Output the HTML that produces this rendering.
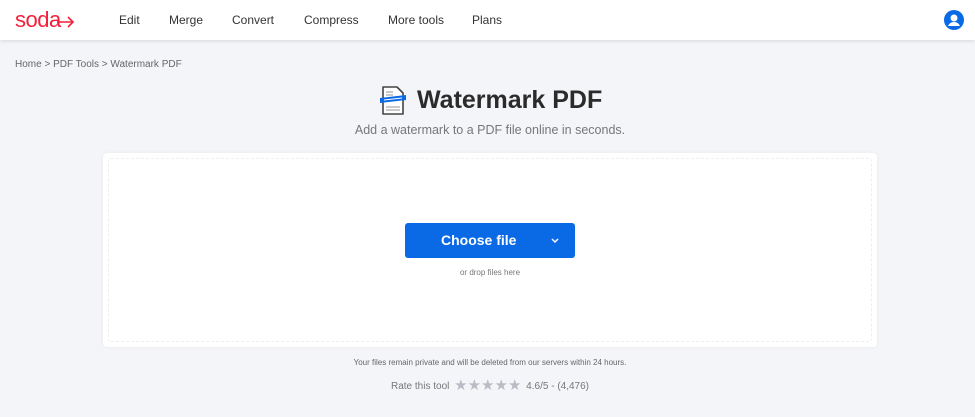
<!DOCTYPE html>
<html><head><meta charset="utf-8"><style>
*{margin:0;padding:0;box-sizing:border-box}
body{width:975px;height:417px;background:#f4f5f9;font-family:"Liberation Sans",sans-serif;position:relative;overflow:hidden;color:#333}
.hdr{position:absolute;left:0;top:0;width:975px;height:40px;background:#fff;box-shadow:0 1px 4px rgba(0,0,0,.12)}
.logo{position:absolute;left:15px;top:7px;font-size:22px;color:#f4213a;letter-spacing:-0.5px}
.nav{position:absolute;top:13px;font-size:12px;color:#333}
.bc{position:absolute;left:15px;top:59px;font-size:10px;color:#666}
h1{position:absolute;left:417px;top:86px;font-size:25px;font-weight:bold;color:#2b2b2b}
.sub{position:absolute;left:0;width:980px;text-align:center;top:123px;font-size:12.5px;color:#777}
.card{position:absolute;left:103px;top:153px;width:774px;height:194px;background:#fff;border-radius:4px;box-shadow:0 0 4px rgba(0,0,0,.05)}
.inner{position:absolute;left:5px;top:5px;right:5px;bottom:5px;border:1px dashed #eee;border-radius:3px}
.btn{position:absolute;left:405px;top:223px;width:170px;height:35px;background:#0a6ae6;border-radius:3px;color:#fff;font-weight:bold;font-size:14px}
.drop{position:absolute;left:0;width:980px;text-align:center;top:268px;font-size:8px;color:#777}
.priv{position:absolute;left:0;width:980px;text-align:center;top:358px;font-size:8px;color:#666}
.rate{position:absolute;left:391px;top:376px;font-size:10px;color:#777;white-space:nowrap}
</style></head><body>
<div class="hdr">
<div class="logo">soda</div>
<svg style="position:absolute;left:57px;top:16px" width="18" height="12" viewBox="0 0 18 12"><path d="M0 6h16M11 1l5 5-5 5" stroke="#f4213a" stroke-width="1.6" fill="none"/></svg>
<div class="nav" style="left:119px">Edit</div>
<div class="nav" style="left:169px">Merge</div>
<div class="nav" style="left:232px">Convert</div>
<div class="nav" style="left:304px">Compress</div>
<div class="nav" style="left:388px">More tools</div>
<div class="nav" style="left:472px">Plans</div>
<svg style="position:absolute;left:944px;top:10px" width="20" height="20" viewBox="0 0 20 20"><circle cx="10" cy="10" r="10" fill="#0a6ae6"/><circle cx="10" cy="8" r="3.5" fill="#fff"/><path d="M4 16c1.5-3 3.5-4 6-4s4.5 1 6 4" fill="#fff"/></svg>
</div>
<div class="bc">Home &gt; PDF Tools &gt; Watermark PDF</div>
<svg style="position:absolute;left:378px;top:85px" width="30" height="32" viewBox="0 0 30 32"><path d="M5 2h14l6 6v21H5z" fill="#fff" stroke="#444" stroke-width="1.6" stroke-linejoin="round"/><path d="M8 7h7M8 10h7M8 22h14M8 25h14" stroke="#aaa" stroke-width="1.2"/><path d="M2 13l26-3v5L2 18z" fill="#0a6ae6"/><path d="M6 15l18-2" stroke="#fff" stroke-width="1"/></svg>
<h1>Watermark PDF</h1>
<div class="sub">Add a watermark to a PDF file online in seconds.</div>
<div class="card"><div class="inner"></div></div>
<div class="btn"><span style="position:absolute;left:36px;top:9px">Choose file</span><svg style="position:absolute;left:145px;top:14px" width="10" height="7" viewBox="0 0 10 7"><path d="M2 2l3 3 3-3" stroke="#fff" stroke-width="1.5" fill="none"/></svg></div>
<div class="drop">or drop files here</div>
<div class="priv">Your files remain private and will be deleted from our servers within 24 hours.</div>
<div class="rate">Rate this tool <span style="color:#b9bcc4;font-size:15px;margin:0 2px;vertical-align:-1px">★★★★★</span> 4.6/5 - (4,476)</div>
</body></html>
